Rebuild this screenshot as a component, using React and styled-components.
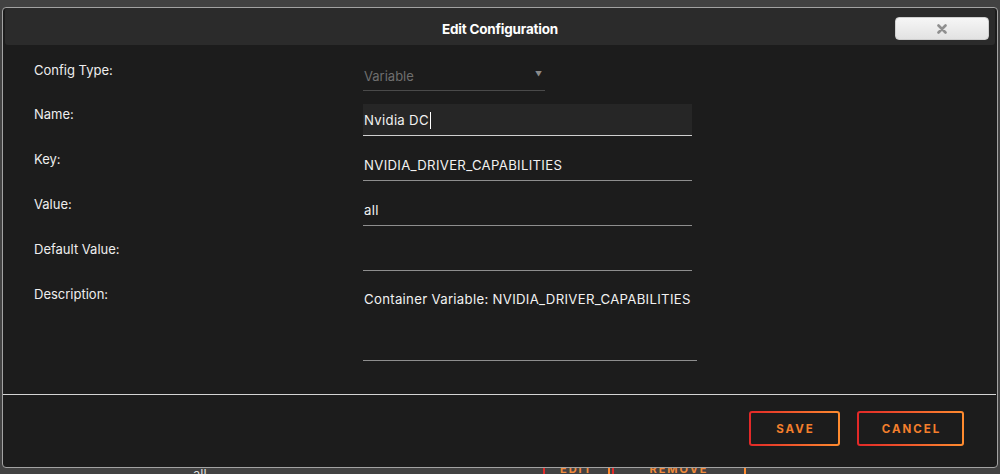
import styled, { createGlobalStyle } from 'styled-components';

const GlobalStyle = createGlobalStyle`
  html, body {
    margin: 0;
    height: 100%;
    background: #424242;
    overflow: hidden;
    font-family: Inter, 'Open Sans', 'Liberation Sans', sans-serif;
  }
`;

const Page = styled.div`
  position: relative;
  width: 1000px;
  height: 474px;
`;

const BackRow = styled.div`
  display: flex;
  align-items: flex-start;
  padding-top: 466px;
`;

const BackCell = styled.div`
  width: ${({ w }) => w}px;
  margin-left: ${({ ml }) => ml || 0}px;
  color: #ddd;
  font-size: 13px;
  line-height: 16px;
`;

const BackButton = styled.div`
  box-sizing: border-box;
  margin-top: -20px;
  width: ${({ w }) => w}px;
  margin-left: ${({ ml }) => ml || 0}px;
  height: 36px;
  padding-top: 14px;
  border: 2px solid transparent;
  background: linear-gradient(#424242, #424242) padding-box,
    linear-gradient(90deg, #e22828, #ff8c2f) border-box;
  color: #f08a3a;
  font-size: 11px;
  font-weight: 700;
  letter-spacing: 2px;
  text-align: center;
`;

const Dialog = styled.div`
  position: absolute;
  top: 7px;
  left: 2px;
  width: 996px;
  height: 461px;
  box-sizing: border-box;
  border: 1px solid #a3a3a3;
  border-radius: 4px;
  background: #1c1c1c;
  display: flex;
  flex-direction: column;
`;

const TitleBar = styled.div`
  display: grid;
  grid-template-columns: 1fr auto 1fr;
  align-items: center;
  height: 37px;
  margin: 0 2px;
  background: #2b2b2b;
  border-radius: 3px;
`;

const Title = styled.div`
  grid-column: 2;
  padding-top: 5px;
  color: #fff;
  font-size: 13.5px;
  font-weight: 700;
  letter-spacing: -0.2px;
`;

const CloseButton = styled.button`
  justify-self: end;
  margin: 4px 6px 0 0;
  width: 94px;
  height: 23px;
  border: 1px solid #cfcfcf;
  border-radius: 4px;
  background: linear-gradient(#f6f6f6, #e2e2e2);
  display: flex;
  align-items: center;
  justify-content: center;
  padding: 0;
`;

const Body = styled.div`
  flex: 1;
  padding: 15px 0 0 31px;
`;

const Row = styled.div`
  display: grid;
  grid-template-columns: 329px auto;
  margin-bottom: 13px;
`;

const Label = styled.div`
  color: #eee;
  font-size: 13px;
  line-height: 20px;
`;

const Select = styled.div`
  box-sizing: border-box;
  width: 182px;
  height: 31px;
  padding: 6px 3px 0 1px;
  border-bottom: 1px solid #4a4a4a;
  display: flex;
  justify-content: space-between;
  color: #6f6f6f;
  font-size: 13px;
  line-height: 20px;
`;

const Arrow = styled.span`
  font-size: 7px;
  color: #8a8a8a;
  line-height: 18px;
`;

const Field = styled.div`
  box-sizing: border-box;
  width: ${({ wide }) => (wide ? 334 : 329)}px;
  height: ${({ tall }) => (tall ? 77 : 32)}px;
  padding: ${({ tall }) => (tall ? '5px' : '6px')} 0 0 1px;
  background: ${({ focused }) => (focused ? '#262626' : 'transparent')};
  border-bottom: 1px solid ${({ focused }) => (focused ? '#cfcfcf' : '#8e8e8e')};
  color: #f2f2f2;
  font-size: 13.2px;
  letter-spacing: 0.3px;
  line-height: 20px;
  white-space: nowrap;
`;

const Caret = styled.span`
  display: inline-block;
  width: 1px;
  height: 17px;
  margin-left: 1px;
  vertical-align: -4px;
  background: #fff;
`;

const Divider = styled.div`
  height: 1px;
  margin: 0 1px 0 0;
  background: #d4d4d4;
`;

const Footer = styled.div`
  display: flex;
  justify-content: flex-end;
  gap: 17px;
  padding: 16px 33px 21px 0;
`;

const ActionButton = styled.button`
  box-sizing: border-box;
  width: ${({ w }) => w}px;
  height: 35px;
  border: 2px solid transparent;
  border-radius: 3px;
  background: linear-gradient(#1c1c1c, #1c1c1c) padding-box,
    linear-gradient(90deg, #e22828, #ff8c2f) border-box;
  color: #f47f2c;
  font-family: Inter, 'Open Sans', 'Liberation Sans', sans-serif;
  font-size: 11.5px;
  font-weight: 700;
  letter-spacing: 2px;
  padding: 0 0 0 2px;
`;

const rows = [
  { label: 'Key:', value: 'NVIDIA_DRIVER_CAPABILITIES' },
  { label: 'Value:', value: 'all' },
  { label: 'Default Value:', value: '' },
];

export default function App() {
  return (
    <Page>
      <GlobalStyle />
      <BackRow>
        <BackCell w={40} ml={193}>all</BackCell>
        <BackButton w={67} ml={310}>EDIT</BackButton>
        <BackButton w={134} ml={2}>REMOVE</BackButton>
      </BackRow>
      <Dialog>
        <TitleBar>
          <Title>Edit Configuration</Title>
          <CloseButton aria-label="close">
            <svg width="10" height="10" viewBox="0 0 10 10">
              <path d="M1.5 1.5 L8.5 8.5 M8.5 1.5 L1.5 8.5" stroke="#8f8f8f" strokeWidth="2.6" strokeLinecap="round" />
            </svg>
          </CloseButton>
        </TitleBar>
        <Body>
          <Row>
            <Label>Config Type:</Label>
            <Select>
              <span>Variable</span>
              <Arrow>▼</Arrow>
            </Select>
          </Row>
          <Row>
            <Label>Name:</Label>
            <Field focused>
              Nvidia DC<Caret />
            </Field>
          </Row>
          {rows.map((r) => (
            <Row key={r.label}>
              <Label>{r.label}</Label>
              <Field>{r.value}</Field>
            </Row>
          ))}
          <Row>
            <Label>Description:</Label>
            <Field tall wide>
              Container Variable: NVIDIA_DRIVER_CAPABILITIES
            </Field>
          </Row>
        </Body>
        <Divider />
        <Footer>
          <ActionButton w={91}>SAVE</ActionButton>
          <ActionButton w={107}>CANCEL</ActionButton>
        </Footer>
      </Dialog>
    </Page>
  );
}
